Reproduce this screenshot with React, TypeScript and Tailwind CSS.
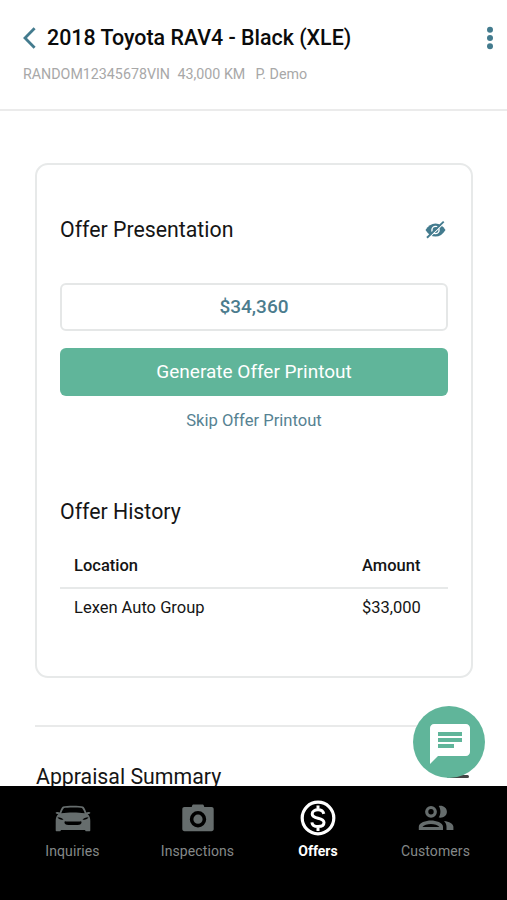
import type {ReactNode} from 'react';
import {clsx} from 'clsx';
import {MdChat} from 'react-icons/md';

const HISTORY = [{id: 0, location: 'Lexen Auto Group', amount: '$33,000'}];

const TABS = [
  {
    id: 0,
    name: 'Inquiries',
    icon: <CarIcon />,
    width: 'w-[145px]',
  },
  {
    id: 1,
    name: 'Inspections',
    icon: <CameraIcon />,
    width: 'w-[105px]',
  },
  {
    id: 2,
    name: 'Offers',
    icon: <DollarIcon />,
    width: 'w-[136px]',
    active: true,
  },
  {
    id: 3,
    name: 'Customers',
    icon: <PeopleIcon />,
    width: 'w-[99px]',
  },
];

export default function App() {
  return (
    <div className="relative flex flex-col w-full h-[900px] overflow-hidden bg-white text-[#151515] font-['Roboto',sans-serif]">
      <Header />
      <main className="flex-1 min-h-0 overflow-hidden px-[35px] pt-[52px]">
        <OfferCard />
        <section className="mt-[47px] w-[438px] border-t-2 border-[#e9eaea] pt-[36px] pl-px">
          <SectionTitle>Appraisal Summary</SectionTitle>
        </section>
      </main>
      <TabBar />
      <ChatButton />
    </div>
  );
}

function Header() {
  return (
    <header className="h-[111px] shrink-0 border-b-2 border-[#ebebeb] pl-[23px] pr-[13px] pt-[24px]">
      <div className="flex items-center h-7">
        <button aria-label="Back">
          <BackIcon />
        </button>
        <h1 className="ml-[11px] flex-1 text-[21.4px] leading-7 font-medium text-[#0b0b0b] whitespace-nowrap">
          2018 Toyota RAV4 - Black (XLE)
        </h1>
        <button aria-label="More">
          <DotsIcon />
        </button>
      </div>
      <div className="flex mt-[12px] text-[14.25px] leading-5 text-[#a8a8a8] whitespace-nowrap">
        <span className="w-[154.500px]">RANDOM12345678VIN</span>
        <span className="w-[78px]">43,000 KM</span>
        <span>P. Demo</span>
      </div>
    </header>
  );
}

function SectionTitle({children}: {children: ReactNode}) {
  return (
    <h2 className="text-[21.3px] leading-7 font-normal whitespace-nowrap">
      {children}
    </h2>
  );
}

function OfferCard() {
  return (
    <section className="w-[438px] h-[515px] rounded-[13px] border-2 border-[#e7e9e9] px-[23px] pt-[51px]">
      <div className="flex items-center justify-between">
        <SectionTitle>Offer Presentation</SectionTitle>
        <button aria-label="Hide offer" className="mr-0.5">
          <HiddenIcon />
        </button>
      </div>

      <div className="mt-[39px] flex h-[48px] items-center justify-center rounded-md border-2 border-[#e5e7e7] text-[19px] font-medium text-[#4b7c8d]">
        $34,360
      </div>
      <button className="mt-[17px] block w-full h-[48px] rounded-md bg-[#60b59a] text-[19px] text-white">
        Generate Offer Printout
      </button>
      <button className="mt-[13px] block w-full text-[16.6px] leading-6 text-[#568292]">
        Skip Offer Printout
      </button>

      <div className="mt-[65px]">
        <SectionTitle>Offer History</SectionTitle>
      </div>
      <table className="mt-[20px] w-full text-[16.5px] leading-6">
        <thead>
          <tr className="border-b-2 border-[#e7e9e9]">
            <th className="pl-[14px] pt-2 pb-[9px] text-left font-medium">
              Location
            </th>
            <th className="w-[86px] pt-2 pb-[9px] text-left font-medium">
              Amount
            </th>
          </tr>
        </thead>
        <tbody>
          {HISTORY.map((item) => (
            <tr key={item.id}>
              <td className="pl-[14px] pt-[7px]">{item.location}</td>
              <td className="pt-[7px]">{item.amount}</td>
            </tr>
          ))}
        </tbody>
      </table>
    </section>
  );
}

function TabBar() {
  return (
    <nav className="flex h-[114px] shrink-0 bg-black pt-[14px]">
      {TABS.map((tab) => (
        <div
          key={tab.id}
          className={clsx(
            'flex flex-col items-center',
            tab.width,
            tab.active ? 'text-white' : 'text-[#666d6d]',
          )}
        >
          <div className="flex h-9 items-center justify-center">{tab.icon}</div>
          <span
            className={clsx(
              'mt-[5px] text-[14px] leading-5',
              tab.active ? 'font-bold' : 'tracking-[0.1px] text-[#858989]',
            )}
          >
            {tab.name}
          </span>
        </div>
      ))}
    </nav>
  );
}

function ChatButton() {
  return (
    <>
      {/* Collapse handle of the summary section, half under the button */}
      <div className="absolute left-[447px] top-[775px] h-[3px] w-[22px] rounded-sm bg-[#454545]" />
      <button
        aria-label="Chat"
        className="absolute left-[413px] top-[706px] flex h-[72px] w-[72px] items-center justify-center rounded-full bg-[#60b59a] text-white"
      >
        <MdChat className="ml-0.5 mt-[3px] h-12 w-12" />
      </button>
    </>
  );
}

function BackIcon() {
  return (
    <svg width="13" height="22" viewBox="0 0 13 22" fill="none">
      <path d="M11.6 1.2 2 11l9.6 9.8" stroke="#437b8e" strokeWidth="2.8" />
    </svg>
  );
}

function DotsIcon() {
  return (
    <svg width="8" height="24" viewBox="0 0 8 24" fill="#437b8e">
      <circle cx="4" cy="3.7" r="3" />
      <circle cx="4" cy="12" r="3" />
      <circle cx="4" cy="20.3" r="3" />
    </svg>
  );
}

function HiddenIcon() {
  return (
    <svg width="21" height="20" viewBox="0 0 21 20" fill="none">
      <path
        d="M.5 10C3 5.700 6.500 3.400 10.500 3.400S18 5.700 20.500 10C18 14.300 14.500 16.600 10.500 16.600S3 14.300.5 10Z"
        fill="#437b8e"
      />
      <circle cx="10.500" cy="10" r="3.600" stroke="#fff" strokeWidth="1.400" />
      <path d="M3.400 18.200 19.600 2.600" stroke="#fff" strokeWidth="1.200" />
      <path d="M2 17.700 18.700 1.600" stroke="#437b8e" strokeWidth="1.900" />
    </svg>
  );
}

function CarIcon() {
  return (
    <svg width="36" height="27" viewBox="0 0 36 27" fill="currentColor">
      <path
        fillRule="evenodd"
        d="M8 1.500C11 .4 25 .4 28 1.500c1.200.5 2.500 3.500 3.300 6 1-.9 3.900-.8 4.100.3.100 1-1.600 1.200-2.700 1.200 2 2 2.600 4 2.600 7v9.200c0 .7-.4 1.100-1 1.100h-3c-.7 0-1.100-.4-1.100-1.100V25H5.800v.2c0 .7-.4 1.100-1.100 1.100h-3c-.6 0-1-.4-1-1.100V16c0-3 .6-5 2.600-7-1.100 0-2.800-.2-2.700-1.200.2-1.100 3.100-1.200 4.100-.3.800-2.500 2.100-5.500 3.300-6ZM9 3C7.800 4.500 6.800 6.500 6.300 8.300c7-1 16.400-1 23.400 0C29.200 6.500 28.200 4.500 27 3c-3-.8-15-.8-18 0ZM2.500 12.200c1 1.900 3 2.600 6 2.600-1-1.600-3-2.400-6-2.600Zm31 0c-3 .2-5 1-6 2.600 3 0 5-.7 6-2.600ZM10 16.200c-.8.600-.7 2.300.5 3 2 1.200 13 1.200 15 0 1.200-.7 1.300-2.400.5-3-3 .5-13 .5-16 0Z"
      />
    </svg>
  );
}

function CameraIcon() {
  return (
    <svg width="32" height="28" viewBox="0 0 32 28" fill="currentColor">
      <path
        fillRule="evenodd"
        d="M11.500.5h9c.7 0 1 .3 1.300 1L22.300 3H29.500c1.300 0 2.200.9 2.200 2.200V25c0 1.300-.9 2.200-2.200 2.200h-27C1.200 27.200.3 26.300.3 25V5.200C.3 3.900 1.200 3 2.500 3h7.200l.5-1.500c.3-.7.6-1 1.300-1ZM16 7a8.200 8.200 0 1 0 0 16.400A8.200 8.200 0 0 0 16 7Zm0 3.600a4.600 4.600 0 1 1 0 9.200 4.600 4.600 0 0 1 0-9.200Z"
      />
    </svg>
  );
}

function DollarIcon() {
  return (
    <svg width="36" height="36" viewBox="0 0 36 36" fill="none">
      <circle cx="18" cy="18" r="15.800" stroke="currentColor" strokeWidth="3.200" />
      <path
        d="M18 5.500v5M18 26v5M23.800 13.800c-.6-2.700-2.900-4-5.800-4-3.300 0-5.800 1.600-5.800 4.100 0 2.800 2.400 3.500 5.800 4.300 3.500.8 6 1.700 6 4.400 0 2.500-2.400 4-5.900 4-3.400 0-5.900-1.500-6.200-4.300"
        stroke="currentColor"
        strokeWidth="3"
      />
    </svg>
  );
}

function PeopleIcon() {
  return (
    <svg width="36" height="26" viewBox="0 0 36 26" fill="currentColor">
      <path
        fillRule="evenodd"
        d="M13 .9a5.900 5.900 0 1 0 0 11.800A5.900 5.900 0 0 0 13 .9Zm0 3.200a2.700 2.700 0 1 1 0 5.400 2.700 2.700 0 0 1 0-5.400ZM.8 25v-3.200c0-4.200 7.200-6.300 12.200-6.300s12 2.100 12 6.300V25H.8Zm3.600-2.900h17c-1.300-1.900-5-3-8.500-3s-7.200 1.100-8.500 3Z"
      />
      <path d="M20.700 1c4.300-.8 8.200 1.700 8.200 5.800s-3.900 6.600-8.200 5.800c2.300-3.300 2.300-8.300 0-11.600ZM26 15.900c5.200.5 9.400 2.600 9.400 5.900V25h-6.900v-3.200c0-2.600-1-4.500-2.500-5.900Z" />
    </svg>
  );
}
